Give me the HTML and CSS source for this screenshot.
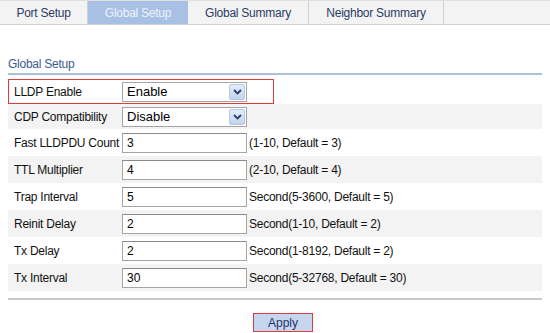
FILE: index.html
```html
<!DOCTYPE html>
<html lang="en">
<head>
  <meta charset="UTF-8" />
  <title>LLDP Global Setup</title>
  <link rel="stylesheet" href="styles.css">
</head>
<body>
  <ul class="tabs">
    <li class="tab" style="width:88px">Port Setup</li>
    <li class="tab active" style="width:100px">Global Setup</li>
    <li class="tab" style="width:121px">Global Summary</li>
    <li class="tab" style="width:135px">Neighbor Summary</li>
    <li class="tab-fill"></li>
  </ul>

  <div class="content">
    <div class="section-title">Global Setup</div>

    <div class="form">
      <div class="row select-row highlight">
        <label>LLDP Enable</label>
        <div class="select">
          <span>Enable</span>
          <span class="arrow"><svg width="9" height="6" viewBox="0 0 9 6"><path d="M1 1 L4.5 4.5 L8 1" fill="none" stroke="#2a3d6b" stroke-width="1.8"/></svg></span>
        </div>
      </div>
      <div class="row select-row">
        <label>CDP Compatibility</label>
        <div class="select">
          <span>Disable</span>
          <span class="arrow"><svg width="9" height="6" viewBox="0 0 9 6"><path d="M1 1 L4.5 4.5 L8 1" fill="none" stroke="#2a3d6b" stroke-width="1.8"/></svg></span>
        </div>
      </div>
      <div class="row">
        <label>Fast LLDPDU Count</label>
        <input type="text" value="3">
        <span class="hint">(1-10, Default = 3)</span>
      </div>
      <div class="row">
        <label>TTL Multiplier</label>
        <input type="text" value="4">
        <span class="hint">(2-10, Default = 4)</span>
      </div>
      <div class="row">
        <label>Trap Interval</label>
        <input type="text" value="5">
        <span class="hint">Second(5-3600, Default = 5)</span>
      </div>
      <div class="row">
        <label>Reinit Delay</label>
        <input type="text" value="2">
        <span class="hint">Second(1-10, Default = 2)</span>
      </div>
      <div class="row">
        <label>Tx Delay</label>
        <input type="text" value="2">
        <span class="hint">Second(1-8192, Default = 2)</span>
      </div>
      <div class="row">
        <label>Tx Interval</label>
        <input type="text" value="30">
        <span class="hint">Second(5-32768, Default = 30)</span>
      </div>
    </div>

    <div class="actions">
      <button class="apply">Apply</button>
    </div>
  </div>
</body>
</html>
```

FILE: styles.css
```css
* {
  margin: 0;
  padding: 0;
  box-sizing: border-box;
}

body {
  font-family: "Liberation Sans", Arial, sans-serif;
  font-size: 12px;
  letter-spacing: -0.25px;
  color: #111;
  background: #fff;
  width: 550px;
  height: 333px;
  overflow: hidden;
}

/* tab strip */
.tabs {
  list-style: none;
  display: flex;
  height: 25px;
  background: #f3f3f3;
  border-top: 1px solid #e0e0e0;
  border-bottom: 1px solid #cfcfcf;
}

.tab {
  display: flex;
  align-items: center;
  justify-content: center;
  color: #2c3b66;
  font-size: 12px;
  border-right: 1px solid #d0d0d0;
}

.tab.active {
  background: #a7c0e4;
  color: #eef3fb;
  border-right: none;
}

.tab-fill {
  flex: 1;
}

/* body */
.content {
  padding: 0 8px;
}

.section-title {
  margin-top: 32px;
  color: #3b5c8d;
  font-size: 12px;
  line-height: 14px;
  padding-bottom: 2px;
  border-bottom: 2px solid #aac2db;
}

.form {
  margin-top: 4px;
}

.row {
  display: flex;
  align-items: center;
  height: 27px;
  padding-left: 6px;
}

.row:nth-child(even) {
  background: #f3f3f3;
}

.row.select-row {
  height: 25px;
}

.row.highlight {
  width: 266px;
  border: 1px solid #e23a3a;
  padding-left: 5px;
}

.row label {
  width: 108px;
  flex-shrink: 0;
  white-space: nowrap;
}

.row input {
  width: 125px;
  height: 20px;
  border: 1px solid #a5a5a5;
  border-top-color: #8a8a8a;
  padding: 0 4px;
  font-family: "Liberation Sans", Arial, sans-serif;
  font-size: 12px;
  color: #000;
  background: #fff;
}

.hint {
  margin-left: 2px;
  color: #111;
  white-space: nowrap;
}

.select {
  width: 125px;
  height: 20px;
  border: 1px solid #a5a5a5;
  background: #fff;
  display: flex;
  align-items: center;
  justify-content: space-between;
  padding-left: 4px;
  padding-right: 1px;
  font-size: 13px;
  letter-spacing: 0;
  color: #000;
}

.arrow {
  width: 16px;
  height: 16px;
  background: linear-gradient(#e4ecf9, #c3d3ee);
  border: 1px solid #b6c7e2;
  border-radius: 2px;
  display: flex;
  align-items: center;
  justify-content: center;
}

.actions {
  margin-top: 7px;
  border-top: 2px solid #c8c8c2;
  display: flex;
  justify-content: center;
  padding-top: 13px;
}

.apply {
  width: 60px;
  height: 19px;
  background: #c6d6ef;
  border: 1px solid #e03a3a;
  color: #23336a;
  font-family: "Liberation Sans", Arial, sans-serif;
  font-size: 12px;
  margin-left: 16px;
}
```
